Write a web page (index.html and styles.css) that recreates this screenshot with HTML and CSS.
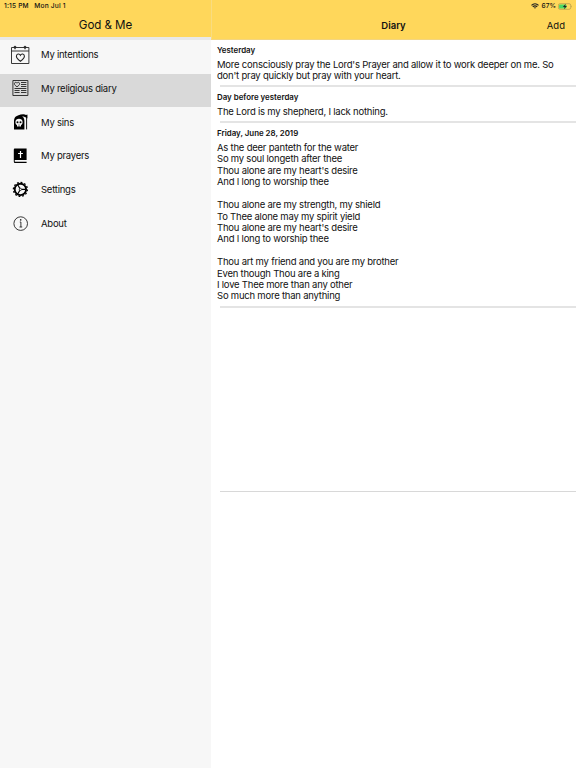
FILE: index.html
```
<!DOCTYPE html>
<html lang="en">
<head>
  <meta charset="UTF-8" />
  <meta name="viewport" content="width=device-width,initial-scale=1.0" />
  <title>God &amp; Me</title>
  <link rel="stylesheet" href="styles.css">
</head>
<body>
  <div class="app">
    <aside class="sidebar">
      <header class="sidebar-header">
        <div class="status status-left"><span>1:15 PM</span><span>Mon Jul 1</span></div>
        <h1>God &amp; Me</h1>
      </header>
      <nav class="menu">
        <a class="item">
          <svg class="icon" viewBox="0 0 20 20" fill="none" stroke="#222" stroke-width=".9">
            <path d="M4 2.5H1.5V18.5H18.9V2.5H16M6 2.5H14M1.5 6H18.9" />
            <circle cx="5" cy="2.2" r="1" fill="#222" /><circle cx="15" cy="2.2" r="1" fill="#222" />
            <path d="M5 2V4.3M15 2V4.3" />
            <path d="M10.4 16.2C7.8 14.3 6.4 13.1 6.4 11.2C6.4 8.7 9.4 8.2 10.4 10.3C11.4 8.2 14.4 8.7 14.4 11.2C14.4 13.1 13 14.3 10.4 16.2Z" stroke-width="1.1" />
          </svg>
          <span>My intentions</span>
        </a>
        <a class="item active">
          <svg class="icon" viewBox="0 0 20 20" fill="none" stroke="#222" stroke-width=".9">
            <path d="M2.9 2.5H17.9V17.5H2.9Z" />
            <path d="M11 4.5H16.4M11 6.5H16.4M11 8.5H16.4M4.5 10.5H16.4M4.5 12.5H9.6M11 12.5H16.4M4.5 14.5H9.6M11 14.5H16.4" />
            <path d="M7 8.8C5.2 7.5 4.4 6.8 4.4 5.7C4.4 4.2 6.4 3.8 7 5.2C7.6 3.8 9.6 4.2 9.6 5.7C9.6 6.8 8.8 7.5 7 8.8Z" />
          </svg>
          <span>My religious diary</span>
        </a>
        <a class="item">
          <svg class="icon" viewBox="0 0 20 20">
            <path d="M4 17.4V9.2C4 5 6.4 3.4 9.3 3.4C12.3 3.4 14.4 5.4 14.4 9.2V17.4Z" />
            <path d="M8 3.4C11 2.1 14.7 1.8 16 3L17.4 2.6V6.4C14.9 4.6 12.5 4.2 10 4.8Z" />
            <path d="M16.6 3.2V17.4" fill="none" stroke="#000" stroke-width=".9" />
            <path d="M5.4 10C5.4 7.7 7.1 6.8 9 6.8C10.9 6.8 12.6 7.7 12.6 10C12.6 11.8 11.9 12.7 11 13.1V14.6H7V13.1C6.1 12.7 5.4 11.8 5.4 10Z" fill="#f7f7f7" />
            <circle cx="7.5" cy="10.2" r="1" /><circle cx="10.5" cy="10.2" r="1" />
            <path d="M8.5 12.4L9 11.4L9.5 12.4ZM8 13.6H8.5V14.6H8ZM9.5 13.6H10V14.6H9.5Z" />
          </svg>
          <span>My sins</span>
        </a>
        <a class="item">
          <svg class="icon" viewBox="0 0 20 20">
            <path d="M5.1 2.6H16.6V14.1H5.3C4.4 14.1 4.4 15.8 5.3 15.8H16.6V17.1H5.2C4.1 17.1 3.8 16.3 3.8 15.2V4C3.8 3.1 4.2 2.6 5.1 2.6Z" />
            <path d="M10.5 5.1V12M8.1 7.5H12.9" fill="none" stroke="#fff" stroke-width="1.2" />
          </svg>
          <span>My prayers</span>
        </a>
        <a class="item">
          <svg class="icon" viewBox="0 0 20 20" fill="none" stroke="#000">
            <circle cx="10.4" cy="10.4" r="7" stroke-width="1.3" stroke-dasharray="1.8 1.865" />
            <circle cx="10.4" cy="10.4" r="5.7" stroke-width="1.9" />
            <circle cx="10.4" cy="10.4" r="1.1" stroke-width=".8" />
            <path d="M11.7 10.4H15.5M9.8 9.4L7.7 5.8M9.8 11.4L7.7 15" stroke-width="1.1" />
          </svg>
          <span>Settings</span>
        </a>
        <a class="item">
          <svg class="icon" viewBox="0 0 20 20" fill="none" stroke="#222" stroke-width=".9">
            <circle cx="10.7" cy="10.6" r="6.8" />
            <path d="M9.8 9H10.9V14M9.5 14H12.2" />
            <circle cx="10.7" cy="6.9" r=".8" fill="#222" stroke="none" />
          </svg>
          <span>About</span>
        </a>
      </nav>
    </aside>

    <main class="content">
      <header class="content-header">
        <div class="status status-right">
          <svg class="wifi" viewBox="0 0 8 6" fill="none" stroke="#222" stroke-width="1.2">
            <path d="M.5 2.3C2.5.3 5.5.3 7.5 2.3M1.8 3.8C3 2.6 5 2.6 6.2 3.8" />
            <path d="M2.9 4.6Q4 3.8 5.1 4.6L4 5.8Z" fill="#222" stroke="none" />
          </svg>
          <span>67%</span>
          <svg class="battery" viewBox="0 0 15 7">
            <rect x=".4" y=".7" width="12.3" height="5.6" rx="1.6" fill="none" stroke="#a58f46" stroke-width=".6" />
            <rect x="1.1" y="1.4" width="7.3" height="4.2" rx=".9" fill="#4cd964" />
            <path d="M7.8.8L4.8 3.9H6.7L5.9 6.2L9 3.1H7.1Z" fill="#222" />
            <path d="M13.4 2.5Q14.5 3.5 13.4 4.5Z" fill="#a58f46" />
          </svg>
        </div>
        <div class="title-bar">
          <h2>Diary</h2>
          <a class="add">Add</a>
        </div>
      </header>
      <section class="entry">
        <h3>Yesterday</h3>
        <p>More consciously pray the Lord's Prayer and allow it to work deeper on me. So
don't pray quickly but pray with your heart.</p>
      </section>
      <section class="entry">
        <h3>Day before yesterday</h3>
        <p>The Lord is my shepherd, I lack nothing.</p>
      </section>
      <section class="entry">
        <h3>Friday, June 28, 2019</h3>
        <p>As the deer panteth for the water
So my soul longeth after thee
Thou alone are my heart's desire
And I long to worship thee

Thou alone are my strength, my shield
To Thee alone may my spirit yield
Thou alone are my heart's desire
And I long to worship thee

Thou art my friend and you are my brother
Even though Thou are a king
I love Thee more than any other
So much more than anything</p>
      </section>
      <section class="entry empty"></section>
    </main>
  </div>
</body>
</html>
```
FILE: styles.css
```
* { box-sizing: border-box; margin: 0; padding: 0; }
body {
  font-family: Inter, sans-serif;
  font-size: 9.5px;
  color: #111;
  background: #fff;
}
.app { display: flex; height: 100vh; overflow: hidden; }

.sidebar { width: 211px; background: #f7f7f7; flex-shrink: 0; }
.sidebar-header {
  height: 37px;
  background: #ffd75b;
  text-align: center;
}
.status {
  display: flex;
  height: 12px;
  align-items: center;
  font-size: 6.6px;
  font-weight: 500;
  white-space: nowrap;
}
.status-left { gap: 5.5px; padding-left: 4px; letter-spacing: .18px; }
.sidebar-header h1 {
  font-size: 11.6px;
  font-weight: 400;
  line-height: 26px;
  letter-spacing: -.08px;
}
.menu { border-top: 3px solid #e8e8e8; }
.item {
  display: flex;
  align-items: center;
  height: 33.7px;
  padding: 0 0 4.4px 10px;
  letter-spacing: -.24px;
}
.item.active { background: #d9d9d9; }
.icon { width: 20px; height: 20px; margin-right: 11px; }

.content { flex: 1; }
.content-header {
  height: 40px;
  background: #ffd75b;
  border-left: 1px solid #f9dc80;
  border-bottom: 1px solid #f3d581;
}
.status-right {
  justify-content: flex-end;
  gap: 3px;
  padding-right: 3px;
}
.wifi { width: 8px; height: 6px; }
.battery { width: 15px; height: 7px; margin-left: -1px; }
.title-bar {
  display: grid;
  grid-template-columns: 1fr auto 1fr;
  align-items: center;
  height: 27px;
  padding: 0 11px 0 10px;
}
.title-bar h2 { grid-column: 2; font-size: 9.5px; font-weight: 600; }
.add { justify-self: end; }

.entry {
  padding: 4px 0 5.9px 6px;
  background: linear-gradient(#e4e4e4, #e4e4e4) 9px 100% / 100% 2px no-repeat;
}
.entry h3 {
  font-size: 7.9px;
  font-weight: 600;
  line-height: 12px;
  margin-bottom: 2.7px;
}
.entry p {
  line-height: 11.4px;
  letter-spacing: -.22px;
  white-space: pre;
}
.entry.empty {
  height: 184px;
  background-image: linear-gradient(#d8d8d8, #d8d8d8);
  background-size: 100% 1px;
}
```
